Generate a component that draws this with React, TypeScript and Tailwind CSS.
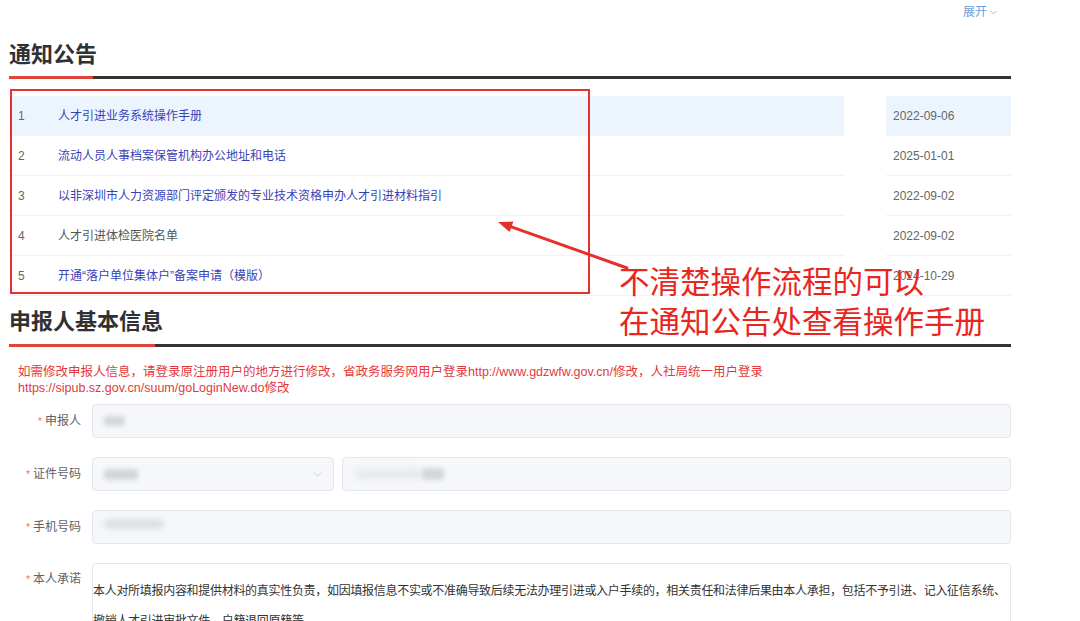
import { ChevronDown } from "lucide-react";

const font = "font-['Liberation_Sans','Noto_Sans_CJK_SC',sans-serif]";

const notices = [
  { no: 1, title: "人才引进业务系统操作手册", date: "2022-09-06", active: true, link: true },
  { no: 2, title: "流动人员人事档案保管机构办公地址和电话", date: "2025-01-01", link: true },
  { no: 3, title: "以非深圳市人力资源部门评定颁发的专业技术资格申办人才引进材料指引", date: "2022-09-02", link: true },
  { no: 4, title: "人才引进体检医院名单", date: "2022-09-02", link: false },
  { no: 5, title: "开通“落户单位集体户”备案申请（模版）", date: "2024-10-29", link: true },
];

function SectionTitle({ text, redWidth, className }: { text: string; redWidth: string; className: string }) {
  return (
    <div>
      <div className={className}>
        <h2 className="text-[22px] font-bold leading-[30px] text-[#303133]">{text}</h2>
      </div>
      <div className="flex h-[3px]">
        <div className={`${redWidth} bg-[#e0453d]`} />
        <div className="flex-1 bg-[#333333]" />
      </div>
    </div>
  );
}

function Label({ text }: { text: string }) {
  return (
    <div className="w-[83px] shrink-0 pr-[11px] text-right text-[12px] text-[#606266]">
      <span className="mr-[3px] text-[10px] text-[#f56c6c]">*</span>
      {text}
    </div>
  );
}

function Blob({ className }: { className: string }) {
  return <span className={`block rounded-sm bg-[#d4d6da] blur-[2px] ${className}`} />;
}

export default function App() {
  return (
    <div className={`relative h-[621px] w-[1080px] overflow-hidden bg-white ${font}`}>
      <div className="w-[1011px] pl-[9px]">
        {/* expand toggle */}
        <div className="flex h-[24px] items-center justify-end pr-[12px] text-[12px] text-[#6b9fd9]">
          展开
          <ChevronDown size={11} strokeWidth={1.5} className="ml-[1px]" />
        </div>

        <SectionTitle text="通知公告" redWidth="w-[84px]" className="h-[52px] pt-[16px]" />

        {/* notice list */}
        <div className="ml-[3px] mt-[17px] text-[12px]">
          {notices.map((n) => (
            <div key={n.no} className="flex h-[40px]">
              <div
                className={`flex w-[832px] items-center border-b border-[#f0f2f5] ${
                  n.active ? "bg-[#ecf5fe]" : ""
                }`}
              >
                <span className="w-[46px] pl-[6px] text-[#666]">{n.no}</span>
                <span className={n.link ? "text-[#3a3fb8]" : "text-[#555]"}>{n.title}</span>
              </div>
              <div className="w-[42px]" />
              <div
                className={`flex w-[125px] items-center border-b border-[#f0f2f5] pl-[7px] text-[#666] ${
                  n.active ? "bg-[#ecf5fe]" : ""
                }`}
              >
                {n.date}
              </div>
            </div>
          ))}
        </div>

        <SectionTitle text="申报人基本信息" redWidth="w-[146px]" className="h-[48px] pt-[11px]" />

        <p className="mt-[17px] pl-[9px] text-[12.5px] leading-[16px] text-[#e4393c]">
          如需修改申报人信息，请登录原注册用户的地方进行修改，省政务服务网用户登录http://www.gdzwfw.gov.cn/修改，人社局统一用户登录
          <br />
          https://sipub.sz.gov.cn/suum/goLoginNew.do修改
        </p>

        {/* form */}
        <div className="mt-[8px] flex flex-col gap-[19px]">
          <div className="flex items-center">
            <Label text="申报人" />
            <div className="flex h-[34px] flex-1 items-center rounded border border-[#e4e7ed] bg-[#f5f7fa] pl-[11px]">
              <Blob className="h-[10px] w-[21px]" />
            </div>
          </div>

          <div className="flex items-center">
            <Label text="证件号码" />
            <div className="flex h-[34px] w-[242px] items-center justify-between rounded border border-[#e4e7ed] bg-[#f5f7fa] pl-[11px] pr-[9px]">
              <Blob className="h-[11px] w-[34px]" />
              <ChevronDown size={13} strokeWidth={1.5} className="text-[#c0c4cc]" />
            </div>
            <div className="ml-[8px] flex h-[34px] flex-1 items-center rounded border border-[#e4e7ed] bg-[#f5f7fa] pl-[13px]">
              <span className="block h-[10px] w-[66px] rounded-sm bg-[#e6e8eb] blur-[3px]" />
              <Blob className="h-[12px] w-[22px]" />
            </div>
          </div>

          <div className="flex items-center">
            <Label text="手机号码" />
            <div className="flex h-[34px] flex-1 items-center rounded border border-[#e4e7ed] bg-[#f5f7fa] pl-[11px]">
              <span className="-mt-[6px] block h-[8px] w-[60px] rounded-full bg-[#d8dadd] blur-[3px]" />
            </div>
          </div>

          <div className="flex items-start">
            <div className="leading-[32px]">
              <Label text="本人承诺" />
            </div>
            <div className="h-[90px] flex-1 whitespace-nowrap rounded border border-[#e4e7ed] bg-white pt-[12px] text-[12px] leading-[30px] tracking-[-0.3px] text-[#333]">
              <div>
                本人对所填报内容和提供材料的真实性负责，如因填报信息不实或不准确导致后续无法办理引进或入户手续的，相关责任和法律后果由本人承担，包括不予引进、记入征信系统、
              </div>
              <div>撤销人才引进审批文件、户籍退回原籍等。</div>
            </div>
          </div>
        </div>
      </div>

      {/* annotation overlay */}
      <div className="pointer-events-none absolute left-[10px] top-[89px] h-[205px] w-[580px] border-2 border-[#e8302a]" />
      <svg className="pointer-events-none absolute left-[490px] top-[210px]" width="150" height="70" viewBox="0 0 150 70">
        <line x1="137" y1="58" x2="20" y2="16.3" stroke="#e8302a" strokeWidth="3" strokeLinecap="round" />
        <polygon points="8,12 23.4,11.6 19.6,22" fill="#e8302a" />
      </svg>
      <div className="pointer-events-none absolute left-[619px] top-[262px] text-[30.5px] leading-[40px] text-[#e8261e]">
        <div>不清楚操作流程的可以</div>
        <div>在通知公告处查看操作手册</div>
      </div>
    </div>
  );
}
